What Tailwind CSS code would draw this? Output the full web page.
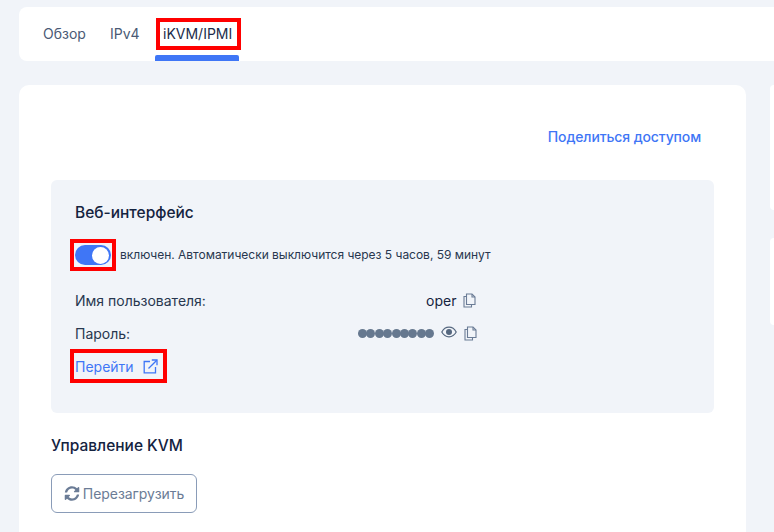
<!DOCTYPE html>
<html lang="ru">
<head>
<meta charset="utf-8">
<title>iKVM/IPMI</title>
<script src="https://cdn.jsdelivr.net/npm/@tailwindcss/browser@4"></script>
</head>
<body class="bg-[#f1f4f9] font-['Inter',sans-serif] h-[532px] w-[774px] overflow-hidden">
  <div class="pl-[19px] pt-[7px] w-[774px]">
    <!-- tabs -->
    <div class="bg-white rounded-l-[8px] h-[54px] flex pl-[24px] text-[14px]">
      <div class="w-[67px] pt-[18px] leading-[17px] text-[#4a5a75]">Обзор</div>
      <div class="w-[45px] pt-[18px] leading-[17px] text-[#4a5a75]">IPv4</div>
      <div class="relative w-[84px] pt-[18px] leading-[17px] pl-[8px] text-[#1c2c4a]">
        iKVM/IPMI
        <div class="absolute left-[1px] top-[11px] w-[85px] h-[32px] border-[4px] border-[#ff0000]"></div>
        <div class="absolute left-0 right-0 bottom-0 h-[6px] rounded-t-[2px] bg-[#3f76f6]"></div>
      </div>
    </div>

    <div class="flex mt-[24px] gap-[24px]">
      <!-- main card -->
      <div class="bg-white rounded-t-[10px] w-[727px] h-[460px] shrink-0 px-[32px]">
        <div class="flex justify-end pt-[43px] pr-[13px] text-[14px] leading-[17px] font-medium tracking-[-0.12px] text-[#3f76f6]">Поделиться доступом</div>

        <div class="bg-[#f1f4f9] rounded-[6px] h-[233px] mt-[35px] pl-[24px] relative">
          <h2 class="pt-[23px] text-[15.5px] leading-[20px] font-medium text-[#14233f]">Веб-интерфейс</h2>

          <div class="flex items-center mt-[20px] h-[24px]">
            <div class="relative w-[36px] h-[20px] rounded-full bg-[#3f76f6] flex items-center justify-end pr-[2px]">
              <div class="w-[17px] h-[17px] rounded-full bg-white"></div>
              <div class="absolute left-[-5px] top-[-6px] w-[46px] h-[32px] border-[4px] border-[#ff0000]"></div>
            </div>
            <span class="ml-[9px] text-[12px] tracking-[-0.02px] text-[#28374f]">включен. Автоматически выключится через 5 часов, 59 минут</span>
          </div>

          <div class="flex items-center mt-[23px] h-[20px] text-[14px] text-[#28374f]">
            <span class="w-[351px]">Имя пользователя:</span>
            <span class="text-[#14233f]">oper</span>
            <svg class="ml-[7px]" width="13" height="15" viewBox="0 0 13 15" fill="none" stroke="#6b7c96" stroke-width="1.1"><path d="M3.500 3V1h5.500l3 3v7.500H3.500z"/><path d="M9 1v3h3"/><path d="M3.500 3.500H1V14h7.500v-2.500"/></svg>
          </div>

          <div class="flex items-center mt-[13px] h-[20px] text-[14px] text-[#28374f]">
            <span class="w-[283px]">Пароль:</span>
            <div class="flex">
              <span class="w-[9px] h-[9px] rounded-full bg-[#66788f] -mr-[0.6px]"></span>
              <span class="w-[9px] h-[9px] rounded-full bg-[#66788f] -mr-[0.6px]"></span>
              <span class="w-[9px] h-[9px] rounded-full bg-[#66788f] -mr-[0.6px]"></span>
              <span class="w-[9px] h-[9px] rounded-full bg-[#66788f] -mr-[0.6px]"></span>
              <span class="w-[9px] h-[9px] rounded-full bg-[#66788f] -mr-[0.6px]"></span>
              <span class="w-[9px] h-[9px] rounded-full bg-[#66788f] -mr-[0.6px]"></span>
              <span class="w-[9px] h-[9px] rounded-full bg-[#66788f] -mr-[0.6px]"></span>
              <span class="w-[9px] h-[9px] rounded-full bg-[#66788f] -mr-[0.6px]"></span>
              <span class="w-[9px] h-[9px] rounded-full bg-[#66788f]"></span>
            </div>
            <svg class="ml-[7px] -mt-[3px]" width="16" height="12" viewBox="0 0 16 12" fill="none"><path d="M0.800 6C2.500 2.800 5 1.200 8 1.200S13.500 2.800 15.200 6C13.500 9.200 11 10.800 8 10.800S2.500 9.200 0.800 6z" stroke="#55677f" stroke-width="1.2"/><circle cx="8" cy="6" r="3" fill="#55677f"/></svg>
            <svg class="ml-[7px]" width="13" height="15" viewBox="0 0 13 15" fill="none" stroke="#6b7c96" stroke-width="1.1"><path d="M3.500 3V1h5.500l3 3v7.500H3.500z"/><path d="M9 1v3h3"/><path d="M3.500 3.500H1V14h7.500v-2.500"/></svg>
          </div>

          <div class="relative inline-flex items-center mt-[13px] h-[20px] text-[14px] text-[#3f76f6]">
            Перейти
            <svg class="ml-[9px]" width="15" height="15" viewBox="0 0 15 15" fill="none" stroke="#3f76f6" stroke-width="1.3"><path d="M7 2.500H1.200v11.300h11.300V8"/><path d="M5.500 9.500L13.800 1.200"/><path d="M8.800 1h5.200v5.200"/></svg>
            <div class="absolute left-[-5px] top-[-7px] w-[97px] h-[34px] border-[4px] border-[#ff0000]"></div>
          </div>
        </div>

        <h2 class="mt-[23px] text-[15.5px] leading-[20px] font-medium text-[#14233f]">Управление KVM</h2>
        <button class="mt-[18px] w-[146px] h-[39px] flex items-center justify-center rounded-[6px] border border-[#8a9cb8] bg-white text-[14px] tracking-[-0.05px] text-[#6b7c96]">
          <svg width="16" height="15" viewBox="0 0 512 512" fill="#6b7c96" class="mr-[3px]"><path d="M370.700 133.300C339.500 104 298.900 88 255.800 88c-77.500.1-144.300 53.200-162.800 126.900-1.300 5.400-6.100 9.100-11.700 9.100H24.100c-7.500 0-13.200-6.800-11.800-14.200C33.900 94.900 134.800 8 256 8c66.400 0 126.800 26.100 171.300 68.700L463 41c15.100-15.100 41-4.400 41 17v134c0 13.300-10.700 24-24 24H346c-21.400 0-32.100-25.900-17-41zM32 296h134c21.400 0 32.100 25.900 17 41l-41.700 41.700c31.200 29.300 71.800 45.300 114.900 45.300 77.400-.1 144.300-53.100 162.800-126.800 1.300-5.400 6.100-9.100 11.700-9.100h57.200c7.500 0 13.200 6.800 11.800 14.200C478.100 417.100 377.200 504 256 504c-66.400 0-126.800-26.100-171.300-68.700L49 471c-15.100 15.100-41 4.400-41-17V320c0-13.300 10.700-24 24-24z"/></svg>
          Перезагрузить
        </button>
      </div>

      <!-- side cards -->
      <div class="flex flex-col gap-[28px] w-[4px]">
        <div class="bg-white rounded-l-[4px] h-[125px]"></div>
        <div class="bg-white rounded-l-[4px] h-[87px]"></div>
      </div>
    </div>
  </div>
</body>
</html>
